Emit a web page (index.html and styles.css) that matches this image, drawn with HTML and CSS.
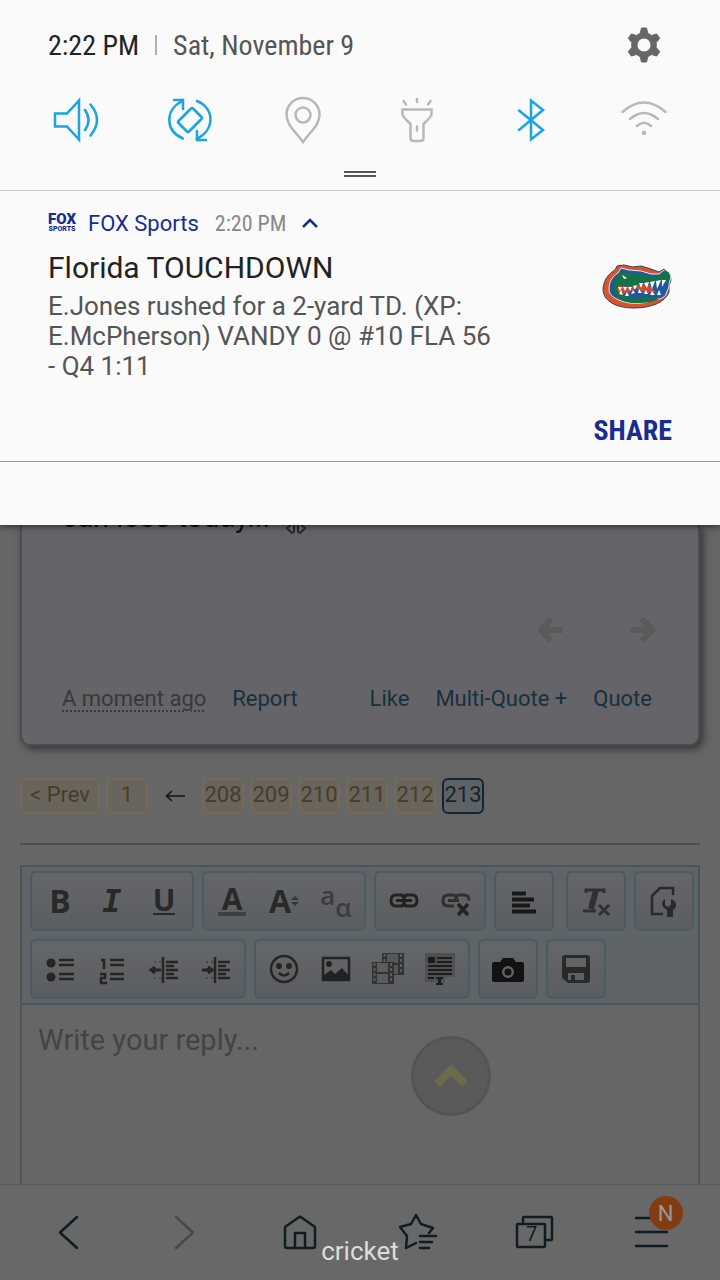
FILE: index.html
```html
<!DOCTYPE html>
<html lang="en">
<head>
  <meta charset="UTF-8">
  <meta name="viewport" content="width=device-width, initial-scale=1.0">
  <title>Notifications</title>
  <link rel="stylesheet" href="styles.css">
</head>
<body>
  <!-- Notification shade -->
  <section class="shade">
    <header class="status">
      <span class="clock">2:22 PM</span>
      <span class="divider"></span>
      <span class="date">Sat, November 9</span>
      <button class="settings" aria-label="Settings">
        <svg width="40" height="40" viewBox="0 0 40 40"><path fill="#666" stroke="#666" stroke-linejoin="round" fill-rule="evenodd" d="M17.500 3h5l1.300 5.300 3.800 2.200 5.200-1.500 2.900 4.500-3.500 4v5l3.500 4-2.900 4.500-5.200-1.500-3.800 2.200-1.300 5.300h-5l-1.300-5.300-3.800-2.200-5.200 1.500-2.900-4.500 3.500-4v-5l-3.500-4 2.900-4.500 5.200 1.500 3.800-2.200zM20 13a7 7 0 1 0 0 14 7 7 0 0 0 0-14z"/></svg>
      </button>
    </header>
    <div class="toggles">
      <button class="toggle on" aria-label="Sound">
        <svg width="48" height="48" viewBox="0 0 48 48"><path d="M3 17.500h12L27 4.500v39L15 30.500H3zM33 14q7 10 0 20M38.500 8.500q13 15.500 0 31"/></svg>
      </button>
      <button class="toggle on" aria-label="Auto rotate">
        <svg width="48" height="48" viewBox="0 0 48 48"><path d="M27 12.500l8.500 8.500q1 1 0 2L23 35.500q-1 1-2 0L12.500 27q-1-1 0-2L25 12.500q1-1 2 0zM17 42.500C-1 35-1 14 15.500 5.500M8 4h9v9M31 5c18 7.500 18 29-.5 38M40 44h-9v-9"/></svg>
      </button>
      <button class="toggle" aria-label="Location">
        <svg width="48" height="48" viewBox="0 0 48 48"><path d="M24 46C16 35 7.500 29 7.500 18.500a16.500 16.500 0 0 1 33 0C40.500 29 32 35 24 46z"/><circle cx="24" cy="19" r="7.500"/></svg>
      </button>
      <button class="toggle" aria-label="Flashlight">
        <svg width="48" height="48" viewBox="0 0 48 48"><path d="M9.500 13.500h29v5q0 2-8 9.500v14q0 3-3 3h-7q-3 0-3-3V28q-8-7.500-8-9.500zM24 30.500v4M24 3v3M10.500 5l2.500 3.500M37.500 5L35 8.500"/></svg>
      </button>
      <button class="toggle on" aria-label="Bluetooth">
        <svg width="48" height="48" viewBox="0 0 48 48"><path d="M12 14.500l24 19.500-12 9.500v-39L36 14 12 34"/></svg>
      </button>
      <button class="toggle" aria-label="Wi-Fi">
        <svg width="48" height="48" viewBox="0 0 48 48"><path d="M2.500 16q21.500-19 43 0M10 23q14-12 28 0M17 30q7-6.500 14 0"/><circle class="dot" cx="24" cy="37" r="2.300"/></svg>
      </button>
    </div>
    <div class="handle"></div>

    <article class="notification">
      <div class="source">
        <span class="fox-logo"><b>FOX</b><small>SPORTS</small></span>
        <span class="app-name">FOX Sports</span>
        <time class="time">2:20 PM</time>
        <button class="collapse" aria-label="Collapse">
          <svg width="16" height="12" viewBox="0 0 16 12"><path fill="none" stroke="#172d92" stroke-width="2.500" d="M1 10l7-7 7 7"/></svg>
        </button>
      </div>
      <div class="content">
        <div>
          <h1>Florida TOUCHDOWN</h1>
          <p>E.Jones rushed for a 2-yard TD. (XP: E.McPherson) VANDY 0 @ #10 FLA 56 - Q4 1:11</p>
        </div>
        <svg class="team" width="72" height="46" viewBox="0 0 72 46">
          <path fill="#d9532d" stroke="#37435c" d="M3 25C4 14 10 9 15 6l2-4 7-1 9 2 8-1 10 3 8 3 5-3 6 5 1 6-2 6v6C65 39 50 44 34 44 16 44 3 37 3 25z"/>
          <path fill="#2256a0" stroke="#e6ece9" d="M9 25c0-8 4-13 9-16l3-5 8 2 12 1 10 3 8 0 5-4 5 2 2 5-2 7 0 3-3 7c-2 5-8 5-13 6-12 5-26 4-34 0-7-3-10-6-10-11z"/>
          <path fill="#157149" d="M13 21c2-7 5-10 8-13l9 1 12 1 10 3 7-1 6-6 4 3 1 5-2 4-9 0-8 3-9-1-9 4-12-2-4 5c2 5 8 5 14 6 8 1 14-1 20 0l8 2c-6 3-14 4-20 4-9 0-16-1-21-5-5-4-6-8-5-13z"/>
          <path fill="#c94e39" d="M18 22l14 1 10-3 7 1 7 7-11 1-9-5-8 5-8 1-3-4z"/>
          <path fill="#fff" d="M18 23l2 4 2-4zM23 23l2 4 2-4zM28 23l2 4 2-4zM33 22l2 4 2-5zM39 19l2 5 2-5zM44 19l3 5 2-6zM50 18l2 7 3-8zM56 17l1 8 4-9zM62 16l0 7 4-7z"/>
          <path fill="#fff" d="M19 30l2-4 2 5zM25 32l2-4 2 4zM31 30l2-4 2 3zM38 29l1-4 3 4zM44 30l2-4 2 4zM50 31l2-4 3 4zM57 31l2-5 2 5zM22 11l5 3-3 1z"/>
        </svg>
      </div>
      <div class="actions"><button class="share">SHARE</button></div>
    </article>
  </section>

  <!-- Forum page under the shade -->
  <main class="page">
    <article class="post">
      <div class="post-text">
        <span>can lose today...</span>
        <svg width="20" height="14" viewBox="0 0 20 14"><path fill="#737373" stroke="#292929" stroke-width="2" d="M8 2v9l-2 1-5-5 5-4zM12 2v9l2 1 5-5-5-4z"/></svg>
      </div>
      <div class="post-arrows">
        <svg width="28" height="28" viewBox="0 0 28 28"><path d="M15 3L5 14l10 11M5 14h22"/></svg>
        <svg width="28" height="28" viewBox="0 0 28 28"><path d="M14 3l10 11-10 11M24 14H2"/></svg>
      </div>
      <footer class="post-links">
        <abbr>A moment ago</abbr>
        <a href="#">Report</a>
        <a class="like" href="#">Like</a>
        <a href="#">Multi-Quote +</a>
        <a href="#">Quote</a>
      </footer>
    </article>

    <nav class="pagination" aria-label="Pages">
      <a class="prev" href="#">&lt; Prev</a>
      <a href="#">1</a>
      <span class="skip"><svg width="20" height="14" viewBox="0 0 20 14"><path fill="none" stroke="#141414" stroke-width="1.500" d="M7 2L1.500 7 7 12M1.500 7H20"/></svg></span>
      <a href="#">208</a>
      <a href="#">209</a>
      <a href="#">210</a>
      <a href="#">211</a>
      <a href="#">212</a>
      <a class="current" href="#">213</a>
    </nav>

    <form class="editor">
      <div class="toolbar">
        <div class="group">
          <button type="button" aria-label="Bold"><b class="letter">B</b></button>
          <button type="button" aria-label="Italic"><b class="letter italic">I</b></button>
          <button type="button" aria-label="Underline"><b class="letter underline">U</b></button>
        </div>
        <div class="group">
          <button type="button" aria-label="Text color"><b class="letter color">A</b></button>
          <button type="button" aria-label="Font size"><b class="letter">A</b><svg width="8" height="12" viewBox="0 0 8 12"><path fill="#333" d="M0 5l4-4 4 4zM0 7l4 4 4-4z"/></svg></button>
          <button type="button" aria-label="Font family"><span class="alpha"><span>a</span><span>α</span></span></button>
        </div>
        <div class="group">
          <button type="button" aria-label="Link">
            <svg width="32" height="32" viewBox="0 0 32 32"><g fill="none" stroke="#222" stroke-width="3"><path d="M14 10H8q-5 0-5 5.500t5 5.500h6M18 10h6q5 0 5 5.500t-5 5.500h-6M8 15.500h16"/><path d="M13 10q3 0 3 4M19 21q-3 0-3-4M19 10q-3 0-3 4M13 21q3 0 3-4"/></g></svg>
          </button>
          <button type="button" aria-label="Unlink">
            <svg width="32" height="32" viewBox="0 0 32 32"><path fill="none" stroke="#303030" stroke-width="3" d="M14 21H8q-5 0-5-5.500T8 10h5q3 0 3 4M8 15.500h11M16 14q0-4 3-4h5q5 0 5 5.500"/><path fill="none" stroke="#222" stroke-width="3.500" d="M18 19l10 11M28 19L18 30"/></svg>
          </button>
        </div>
        <div class="group">
          <button type="button" aria-label="Align left">
            <svg width="32" height="32" viewBox="0 0 32 32"><path stroke="#181818" stroke-width="4" d="M4 8.500h14M4 14.500h22M4 20.500h18M4 26.500h24"/></svg>
          </button>
        </div>
        <div class="group push">
          <button type="button" aria-label="Remove formatting">
            <svg width="32" height="32" viewBox="0 0 32 32"><path stroke="#303030" stroke-width="3" fill="none" d="M6 8V5h18v3M3 26h13"/><path stroke="#303030" stroke-width="6" d="M16 5l-5 19"/><path stroke="#303030" stroke-width="3" d="M19 20l10 10M29 20L19 30"/></svg>
          </button>
        </div>
        <div class="group">
          <button type="button" aria-label="Toggle editor">
            <svg width="32" height="32" viewBox="0 0 32 32"><path fill="none" stroke="#292929" stroke-width="2.500" d="M15 29H4V11l8-8h13v7"/><path fill="#292929" d="M17 14v6l3 2 3-2v-6c7 3 6 9 2 11v7h-6v-7c-6-3-6-9-2-11z"/></svg>
          </button>
        </div>
        <div class="group">
          <button type="button" aria-label="Bullet list">
            <svg width="32" height="32" viewBox="0 0 32 32"><g fill="#252525"><circle cx="7" cy="10" r="4.500"/><circle cx="7" cy="24" r="4.500"/></g><path stroke="#252525" stroke-width="2.500" d="M15 7h15M15 12h15M15 21h15M15 26h15"/></svg>
          </button>
          <button type="button" aria-label="Numbered list">
            <svg width="32" height="32" viewBox="0 0 32 32"><path stroke="#252525" stroke-width="2.500" fill="none" d="M5 7h3v9M4 21h5v4H5v5h6"/><path stroke="#252525" stroke-width="2.500" d="M14 7h14M14 12h14M14 21h14M14 26h14"/></svg>
          </button>
          <button type="button" aria-label="Outdent">
            <svg width="32" height="32" viewBox="0 0 32 32"><path stroke="#252525" stroke-width="2.500" d="M15 4v26M18 9h12M18 13h8M18 17h12M18 21h8M18 25h12"/><path stroke="#252525" stroke-width="3" fill="none" d="M13 17H3M7 14l-4 3 4 3"/><path stroke="#484848" stroke-width="2" stroke-dasharray="2 3" d="M6 9h8M6 25h8"/></svg>
          </button>
          <button type="button" aria-label="Indent">
            <svg width="32" height="32" viewBox="0 0 32 32"><path stroke="#252525" stroke-width="2.500" d="M15 4v26M18 9h12M18 13h8M18 17h12M18 21h8M18 25h12"/><path stroke="#252525" stroke-width="3" fill="none" d="M2 17h9M8 14l4 3-4 3"/><path stroke="#484848" stroke-width="2" stroke-dasharray="2 3" d="M6 9h8M6 25h8"/></svg>
          </button>
        </div>
        <div class="group">
          <button type="button" aria-label="Smilies">
            <svg width="32" height="32" viewBox="0 0 32 32"><circle cx="16" cy="16" r="13" fill="none" stroke="#252525" stroke-width="2.500"/><circle cx="11" cy="13" r="3" fill="#252525"/><circle cx="21" cy="13" r="3" fill="#252525"/><path fill="none" stroke="#252525" stroke-width="2.500" d="M11 20q5 5 10 0"/></svg>
          </button>
          <button type="button" aria-label="Image">
            <svg width="32" height="32" viewBox="0 0 32 32"><path fill="none" stroke="#222" stroke-width="2.500" d="M3 5h26v22H3z"/><circle cx="9" cy="11" r="3" fill="#222"/><path fill="#222" d="M4 27v-5l7-5 4 4 7-6 6 7v5z"/></svg>
          </button>
          <button type="button" aria-label="Media">
            <svg width="32" height="32" viewBox="0 0 32 32"><path fill="#333" d="M10 0h22v22H10z"/><path fill="#555759" d="M15 1h11v9H15zM15 12h11v9H15z"/><path stroke="#5a5c5e" stroke-width="2" stroke-dasharray="3 2" d="M12.500 1v20M29 1v20"/><path fill="#333" d="M0 9h22v22H0z"/><path fill="#5a5c5e" d="M5 10h11v9H5zM5 21h11v9H5z"/><path stroke="#5a5c5e" stroke-width="2" stroke-dasharray="3 2" d="M2.500 10v20M19 10v20"/></svg>
          </button>
          <button type="button" aria-label="Quote">
            <svg width="32" height="34" viewBox="0 0 32 34"><path fill="#505050" d="M1 1h30v24H21v5H1z"/><path fill="#1a1a1a" d="M4 5h7v6H4z"/><path fill="none" stroke="#1d1d1d" stroke-width="2" d="M13 6h15M13 10h15M4 14h24M4 18h24M4 22h24M4 26h6M12 26h7M12 32h7"/><path stroke="#1d1d1d" stroke-width="3" d="M15.500 26v6"/></svg>
          </button>
        </div>
        <div class="group">
          <button type="button" aria-label="Camera">
            <svg width="32" height="32" viewBox="0 0 32 32"><path fill="#111213" fill-rule="evenodd" d="M2 9h6l3-4h10l3 4h6q2 0 2 2v16q0 2-2 2H2q-2 0-2-2V11q0-2 2-2zM16 13a6 6 0 1 0 0 12 6 6 0 0 0 0-12z"/><circle cx="16" cy="19" r="3.500" fill="#111213"/></svg>
          </button>
        </div>
        <div class="group">
          <button type="button" aria-label="Save draft">
            <svg width="32" height="32" viewBox="0 0 32 32"><path fill="#292929" fill-rule="evenodd" d="M5 2h22q3 0 3 3v22q0 3-3 3H8l-6-5V5q0-3 3-3zM6 5v9h20V5zM8 20v7h3v-5h4v5h9v-7z"/></svg>
          </button>
        </div>
      </div>
      <textarea aria-label="Reply" placeholder="Write your reply..."></textarea>
    </form>
    <button class="to-top" aria-label="Back to top">
      <svg width="36" height="24" viewBox="0 0 36 24"><path fill="none" stroke="#6b6a4c" stroke-width="8" d="M4 20L18 6l14 14"/></svg>
    </button>
  </main>

  <!-- Browser bar -->
  <nav class="browser-bar">
    <button aria-label="Back"><svg width="40" height="40" viewBox="0 0 40 40"><path d="M29 4L12 19.500 29 35"/></svg></button>
    <button class="disabled" aria-label="Forward"><svg width="40" height="40" viewBox="0 0 40 40"><path d="M11 4l17 15.500L11 35"/></svg></button>
    <button aria-label="Home"><svg width="40" height="40" viewBox="0 0 40 40"><path d="M3 14L18 3.500 33 14v19q0 2-2 2H5q-2 0-2-2zM13 35V20h10v15"/></svg></button>
    <button aria-label="Bookmarks"><svg width="40" height="40" viewBox="0 0 40 40"><path d="M18 30L8 35l1-12-7-9 11-3 5-9 5 9 12 4-4 5M22 23h16M22 29h12M22 35h9"/></svg></button>
    <button class="tabs" aria-label="Tabs"><svg width="40" height="40" viewBox="0 0 40 40"><path d="M3 11h26q1 0 1 1v21q0 1-1 1H3q-1 0-1-1V12q0-1 1-1zM8 11V5q0-1 1-1h27q1 0 1 1v21q0 1-1 1h-6"/></svg><span>7</span></button>
    <button class="menu" aria-label="Menu"><svg width="40" height="40" viewBox="0 0 40 40"><path d="M4 5h31M4 19h31M4 33h31"/></svg><span class="badge">N</span></button>
    <span class="carrier">cricket</span>
  </nav>
</body>
</html>
```
FILE: styles.css
```css
* {
  box-sizing: border-box;
}

body {
  margin: 0;
  min-height: 100vh;
  display: flex;
  flex-direction: column;
  background: #666;
  font-family: Roboto, "Liberation Sans", sans-serif;
  font-size: 22px;
}

button {
  margin: 0;
  padding: 0;
  border: 0;
  background: none;
  font: inherit;
  color: inherit;
}

svg {
  display: block;
}

a {
  color: #18303f;
  text-decoration: none;
}

/* notification shade */
.shade {
  position: relative;
  z-index: 1;
  background: #fafafa;
  padding-bottom: 63px;
  box-shadow: 0 2px 6px rgba(0, 0, 0, 0.5);
}

.status {
  display: flex;
  align-items: center;
  height: 90px;
  padding: 0 56px 0 48px;
  font-family: "Roboto Condensed", Roboto, sans-serif;
  font-size: 28px;
}

.clock {
  color: #222;
}

.divider {
  width: 2px;
  height: 20px;
  margin: 0 16px;
  background: #b0b0b0;
}

.date {
  color: #555;
}

.settings {
  margin-left: auto;
}

.toggles {
  display: flex;
  padding: 6px 19px 0;
}

.toggle {
  flex: 1;
  display: flex;
  justify-content: center;
}

.toggle svg {
  fill: none;
  stroke: #b8b8b8;
  stroke-width: 2.5;
  stroke-linecap: round;
}

.toggle .dot {
  fill: #b8b8b8;
  stroke: none;
}

.toggle.on svg {
  stroke: #17a5e6;
}

.handle {
  width: 32px;
  height: 6px;
  margin: 27px auto 13px;
  border-top: 2px solid #555;
  border-bottom: 2px solid #555;
}

.notification {
  border-top: 1px solid #ccc;
  border-bottom: 1px solid #999;
  padding: 19px 48px 12px;
}

.source {
  display: flex;
  align-items: center;
  height: 26px;
  color: #172d92;
}

.fox-logo {
  width: 28px;
  margin-right: 12px;
  display: flex;
  flex-direction: column;
  align-items: center;
}

.fox-logo b {
  font-size: 15px;
  line-height: 12px;
  font-weight: 900;
}

.fox-logo small {
  font-size: 7px;
  line-height: 8px;
  font-weight: 900;
}

.time {
  margin: 0 16px;
  font-family: "Roboto Condensed", Roboto, sans-serif;
  color: #888;
}

.content {
  display: flex;
  justify-content: space-between;
  align-items: flex-start;
}

.content > div {
  max-width: 450px;
}

h1 {
  margin: 13px 0 4px;
  font-size: 30px;
  line-height: 38px;
  font-weight: 400;
  color: #222;
}

.content p {
  margin: 0;
  font-size: 26px;
  line-height: 30px;
  color: #555;
}

.team {
  margin-top: 28px;
}

.actions {
  display: flex;
  justify-content: flex-end;
  margin-top: 32px;
}

.share {
  font-family: "Roboto Condensed", Roboto, sans-serif;
  font-size: 28px;
  line-height: 36px;
  font-weight: 700;
  color: #172d92;
}

/* forum page */
.page {
  position: relative;
  flex: 1;
  display: flex;
  flex-direction: column;
  padding: 0 20px;
  overflow: hidden;
}

.post {
  border: 2px solid #4c4d4f;
  border-top: 0;
  border-radius: 0 0 10px 10px;
  padding: 0 40px 29px;
  background: #656469;
  box-shadow: 3px 3px 8px #333;
}

.post-text {
  display: flex;
  align-items: flex-end;
  gap: 16px;
  margin-top: -26px;
  height: 36px;
  font-size: 29px;
  line-height: 36px;
  color: #101010;
}

.post-arrows {
  display: flex;
  justify-content: flex-end;
  gap: 64px;
  margin: 81px 0 39px;
  padding-right: 2px;
}

.post-arrows svg {
  fill: none;
  stroke: #5a5a5c;
  stroke-width: 6;
}

.post-links {
  display: flex;
  gap: 26px;
  padding-right: 6px;
  line-height: 32px;
}

.post-links abbr {
  color: #393939;
  text-decoration: underline dotted 2px;
  text-underline-offset: 4px;
}

.like {
  margin-left: auto;
}

.pagination {
  display: flex;
  gap: 6px;
  margin-top: 32px;
  padding-bottom: 29px;
  border-bottom: 2px solid #4b4f54;
}

.pagination a {
  width: 42px;
  height: 36px;
  border: 2px solid #766a57;
  border-radius: 6px;
  background: #69655c;
  display: flex;
  justify-content: center;
  line-height: 30px;
  color: #493c29;
}

.pagination .prev {
  width: 80px;
}

.pagination .current {
  border-color: #18242d;
  background: #5c6266;
  color: #18242d;
}

.skip {
  width: 42px;
  display: flex;
  align-items: center;
  justify-content: center;
}

.editor {
  flex: 1;
  display: flex;
  flex-direction: column;
  margin-top: 20px;
  border: 2px solid #495660;
  border-bottom: 0;
}

.toolbar {
  display: flex;
  flex-wrap: wrap;
  gap: 8px;
  padding: 4px 4px 4px 8px;
  border-bottom: 2px solid #495660;
  background: #5f6467;
}

.group {
  display: flex;
  height: 60px;
  padding: 2px;
  border: 2px solid #4b5a64;
  border-radius: 6px;
  background: linear-gradient(#646668, #5b5e61);
}

.push {
  margin-left: auto;
}

.group button {
  width: 52px;
  display: flex;
  align-items: center;
  justify-content: center;
}

.letter {
  font-family: "Open Sans", sans-serif;
  font-size: 32px;
  line-height: 32px;
  color: #292929;
}

.italic {
  font-family: "DejaVu Sans Mono", monospace;
  font-style: italic;
}

.underline {
  font-size: 30px;
  line-height: 26px;
  border-bottom: 2px solid #292929;
}

.color {
  padding: 0 4px;
  font-size: 30px;
  line-height: 26px;
  border-bottom: 4px solid #3f3f3f;
}

.alpha {
  display: flex;
  font-family: "Open Sans", sans-serif;
  font-size: 26px;
  line-height: 24px;
  font-weight: 600;
  color: #3c3c3c;
}

.alpha span:first-child {
  padding-bottom: 12px;
}

.alpha span:last-child {
  padding-top: 12px;
}

textarea {
  flex: 1;
  width: 100%;
  padding: 16px;
  border: 0;
  outline: 0;
  resize: none;
  background: #666;
  font: 29px/38px Roboto, sans-serif;
}

textarea::placeholder {
  color: #444;
  opacity: 1;
}

.to-top {
  position: absolute;
  right: 229px;
  bottom: 68px;
  width: 80px;
  height: 80px;
  border: 3px solid #545454;
  border-radius: 50%;
  background: #5a5a5a;
  display: flex;
  align-items: center;
  justify-content: center;
}

/* browser bar */
.browser-bar {
  position: relative;
  display: flex;
  height: 96px;
  padding: 0 10px;
  border-top: 1px solid #585b5d;
  background: #686868;
}

.browser-bar button {
  position: relative;
  flex: 1;
  display: flex;
  align-items: center;
  justify-content: center;
}

.browser-bar svg {
  fill: none;
  stroke: #111c22;
  stroke-width: 2.5;
  stroke-linejoin: round;
  stroke-linecap: round;
}

.browser-bar .disabled svg {
  stroke: #44494d;
}

.tabs span {
  position: absolute;
  left: calc(50% - 9px);
  top: 35px;
  font-size: 20px;
  line-height: 28px;
  color: #111c22;
}

.badge {
  position: absolute;
  left: calc(50% - 3px);
  top: 11px;
  width: 34px;
  height: 34px;
  border-radius: 50%;
  background: #823c12;
  color: #999;
  line-height: 36px;
  text-align: center;
}

.carrier {
  position: absolute;
  left: 0;
  right: 0;
  bottom: 14px;
  text-align: center;
  font-size: 26px;
  line-height: 30px;
  color: #ddd;
  pointer-events: none;
}
```
